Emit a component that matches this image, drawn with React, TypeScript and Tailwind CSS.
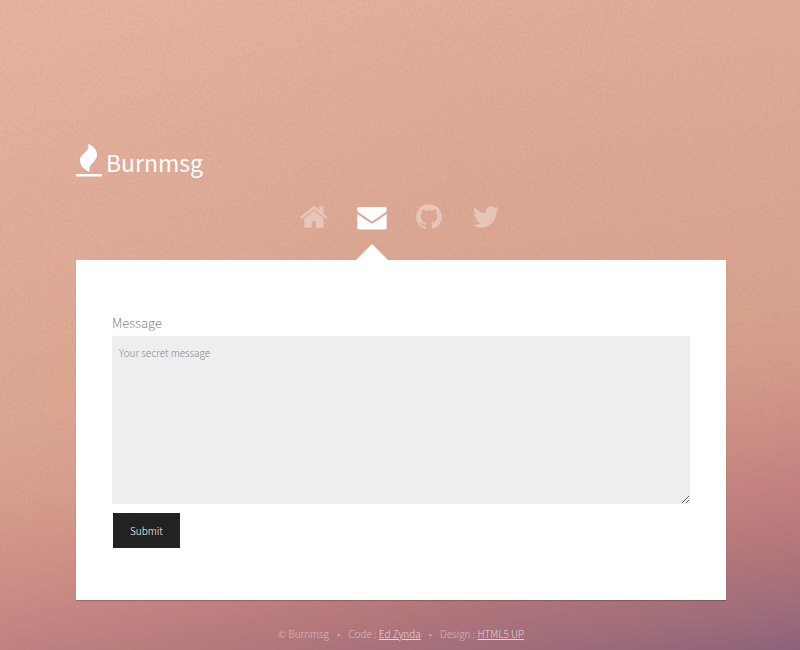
import React from "react";

const FONT =
  "font-['Source_Sans_Pro','Noto_Sans_CJK_JP',sans-serif]";

const navItems = [
  {
    label: "Home",
    path: "M1408 992v480q0 26-19 45t-45 19h-384v-384h-256v384h-384q-26 0-45-19t-19-45v-480q0-1 .5-3t.5-3l575-474 575 474q1 2 1 6zm223-69l-62 74q-8 9-21 11h-3q-13 0-21-7l-692-577-692 577q-12 8-24 7-13-2-21-11l-62-74q-8-10-7-23.5t11-21.5l719-599q32-26 76-26t76 26l244 204v-195q0-14 9-23t23-9h192q14 0 23 9t9 23v408l219 182q10 8 11 21.5t-7 23.5z",
  },
  {
    label: "Message",
    active: true,
    path: "M20 710L810 1260Q896 1310 982 1260L1772 710V1530Q1772 1640 1662 1640H130Q20 1640 20 1530ZM130 300H1662Q1772 300 1772 410V510Q1772 560 1725 592L950 1130Q896 1165 842 1130L67 592Q20 560 20 510V410Q20 300 130 300Z",
  },
  {
    label: "GitHub",
    path: "M896 128q209 0 385.5 103t279.5 279.5 103 385.5q0 251-146.5 451.5t-378.5 277.5q-27 5-40-7t-13-30q0-3 .5-76.5t.5-134.5q0-97-52-142 57-6 102.5-18t94-39 81-66.5 53-105 20.5-150.5q0-119-79-206 37-91-8-204-28-9-81 11t-92 44l-38 24q-93-26-192-26t-192 26q-16-11-42.5-27t-83.5-38.5-85-13.5q-45 113-8 204-79 87-79 206 0 85 20.5 150t52.5 105 80.5 67 94 39 102.5 18q-39 36-49 103-21 10-45 15t-57 5-65.5-21.5-55.5-62.5q-19-32-48.5-52t-49.5-24l-20-3q-21 0-29 4.5t-5 11.5 9 14 13 12l7 5q22 10 43.5 38t31.5 51l10 23q13 38 44 61.5t67 30 69.5 7 55.5-3.5l23-4q0 38 .5 88.5t.5 54.5q0 18-13 30t-40 7q-232-77-378.5-277.5t-146.5-451.5q0-209 103-385.5t279.5-279.5 385.5-103z",
  },
  {
    label: "Twitter",
    path: "M1684 408q-67 98-162 167 1 14 1 42 0 130-38 259.5t-115.5 248.5-184.5 210.5-258 146-323 54.5q-271 0-496-145 35 4 78 4 225 0 401-138-105-2-188-64.5t-114-159.5q33 5 61 5 43 0 85-11-112-23-185.5-111.5t-73.5-205.5v-4q68 38 146 41-66-44-105-115t-39-154q0-88 44-163 121 149 294.5 238.5t371.5 99.5q-8-38-8-74 0-134 94.5-228.5t228.5-94.5q140 0 236 102 109-21 205-78-37 115-142 178 93-10 186-50z",
  },
];

function Backdrop() {
  return (
    <div className="absolute inset-0 -z-10 bg-[linear-gradient(90deg,#ffd0b018_0%,#ffd0b000_60%),linear-gradient(171deg,#e5b1a1_0%,#dfac9a_20%,#d8a48f_54%,#d49b8c_64%,#cd8f85_71%,#c38281_79%,#b3767b_87%,#a06d7b_94%,#8e627b_100%)]">
      <svg className="h-full w-full opacity-10" aria-hidden="true">
        <filter id="grain">
          <feTurbulence type="fractalNoise" baseFrequency="0.35" numOctaves="2" />
          <feColorMatrix values="0 0 0 0 0.3  0 0 0 0 0.15  0 0 0 0 0.1  1.6 0 0 0 -0.5" />
        </filter>
        <rect width="100%" height="100%" filter="url(#grain)" />
      </svg>
    </div>
  );
}

function Logo() {
  return (
    <h1 className="flex h-9 items-end gap-1 text-white">
      <svg className="h-[34px] w-[26px]" viewBox="0 0 26 34" fill="currentColor" aria-hidden="true">
        <path d="M12 0C17 1.500 21 5.500 21 11C21 18 12 19 13.500 28C8 25.500 4 21.500 4 16.500C4 9.500 14.500 8 12 0Z" />
        <rect x="0" y="30" width="26" height="2.500" rx="1" />
      </svg>
      <span className="text-[23px] leading-8 font-normal">Burnmsg</span>
    </h1>
  );
}

function Nav() {
  return (
    <nav className="mt-5 flex justify-center gap-[27px] pr-px">
      {navItems.map((item) => (
        <a
          key={item.label}
          href="#"
          aria-label={item.label}
          className={item.active ? "relative h-[62px] text-white" : "h-[62px] text-white/35"}
        >
          <svg className="mt-1 size-[30px]" viewBox="0 0 1792 1792" fill="currentColor" aria-hidden="true">
            <path d={item.path} />
          </svg>
          {item.active && (
            <span className="absolute bottom-0 left-1/2 h-4 w-8 -translate-x-1/2 bg-white [clip-path:polygon(50%_0,100%_100%,0_100%)]" />
          )}
        </a>
      ))}
    </nav>
  );
}

export default function App() {
  return (
    <div className={`relative isolate flex min-h-screen flex-col justify-end overflow-hidden pr-[74px] pl-[76px] ${FONT}`}>
      <Backdrop />
      <header>
        <Logo />
        <Nav />
      </header>
      <main className="bg-white px-9 pt-[51px] pb-[52px] shadow-[0_1px_1px_#00000033]">
        <form className="flex flex-col items-start" onSubmit={(e) => e.preventDefault()}>
          <label htmlFor="message" className="text-[13px] leading-6 font-light text-[#888]">
            Message
          </label>
          <textarea
            id="message"
            placeholder="Your secret message"
            className="mt-px h-[168px] w-full resize-y bg-[#eee] px-[7px] py-2 text-[10px] leading-[18px] font-light text-[#444] outline-none placeholder:text-[#888]"
          />
          <button
            type="submit"
            className="mt-[9px] ml-px h-[35px] bg-[#222] px-[17px] text-[10px] leading-[18px] font-light text-white"
          >
            Submit
          </button>
        </form>
      </main>
      <footer className="flex justify-center pt-[25px] pb-[7px] text-[10px] leading-[18px] font-light text-white/50">
        <span>© Burnmsg</span>
        <span className="px-2 text-white/40">•</span>
        <span>
          Code : <a href="#" className="text-white/70 underline">Ed Zynda</a>
        </span>
        <span className="px-2 text-white/40">•</span>
        <span>
          Design : <a href="#" className="text-white/70 underline">HTML5 UP</a>
        </span>
      </footer>
    </div>
  );
}
